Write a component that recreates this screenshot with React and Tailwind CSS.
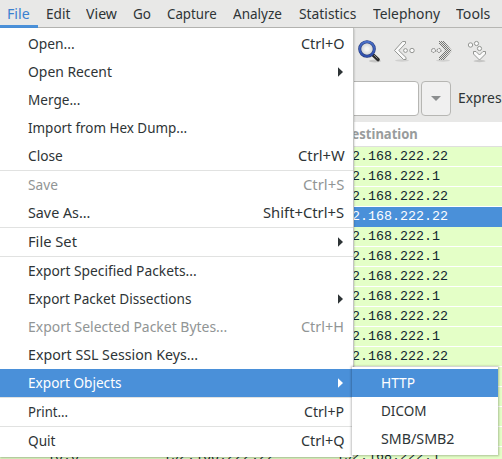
import { useLayoutEffect, useRef, useState } from "react";

// Text run scaled horizontally so that it fills a given width.
function Label({ children, w, className = "" }) {
  const ref = useRef(null);
  const [scale, setScale] = useState(1);
  useLayoutEffect(() => {
    setScale((w - 0.7) / ref.current.offsetWidth);
  }, [w]);
  return (
    <span className={"inline-block shrink-0 whitespace-pre " + className} style={{ width: w }}>
      <span ref={ref} className="inline-block origin-left" style={{ transform: `scaleX(${scale})` }}>
        {children}
      </span>
    </span>
  );
}

const menus = [
  ["Edit", 25, "ml-[7px]"],
  ["View", 32, "ml-[15px]"],
  ["Go", 19, "ml-[15px]"],
  ["Capture", 50, "ml-[15px]"],
  ["Analyze", 50, "ml-[16px]"],
  ["Statistics", 58, "ml-[16px]"],
  ["Telephony", 68, "ml-[16px]"],
  ["Tools", 35, "ml-[15px]"],
];

const items = [
  { t: "Open...", w: 47, k: "Ctrl+O", kw: 44 },
  { t: "Open Recent", w: 85, sub: true },
  { t: "Merge...", w: 53 },
  { t: "Import from Hex Dump...", w: 160 },
  { t: "Close", w: 36, k: "Ctrl+W", kw: 47 },
  null,
  { t: "Save", w: 31, k: "Ctrl+S", kw: 42, off: true },
  { t: "Save As...", w: 63, k: "Shift+Ctrl+S", kw: 82 },
  null,
  { t: "File Set", w: 50, sub: true },
  null,
  { t: "Export Specified Packets...", w: 169 },
  { t: "Export Packet Dissections", w: 164, sub: true },
  { t: "Export Selected Packet Bytes...", w: 200, k: "Ctrl+H", kw: 44, off: true },
  { t: "Export SSL Session Keys...", w: 171 },
  { t: "Export Objects", w: 94, sub: true, on: true },
  null,
  { t: "Print...", w: 41, k: "Ctrl+P", kw: 41 },
  null,
  { t: "Quit", w: 28, k: "Ctrl+Q", kw: 44 },
];

const rows = ["22", "1", "22", "22", "1", "1", "22", "1", "22", "1", "22", null, null, null, null, "1"];

function MenuItem({ item }) {
  if (!item) return <div className="h-px bg-[#e1e2e1]" />;
  const tone = item.on ? "bg-[#4a90d9] text-white" : item.off ? "text-[#919595]" : "text-[#2e3436]";
  return (
    <div className={"flex h-7 items-center justify-between pr-2 pl-7 " + tone}>
      <Label w={item.w}>{item.t}</Label>
      {item.k && <Label w={item.kw}>{item.k}</Label>}
      {item.sub && (
        <svg width="5" height="10" viewBox="0 0 5 10" className="mr-[2px]">
          <path d="M0 0.3L5 5L0 9.7Z" fill="currentColor" />
        </svg>
      )}
    </div>
  );
}

function Toolbar() {
  return (
    <div className="flex h-[46px] items-center pl-[357px]">
      <svg width="145" height="34" viewBox="357 34 145 34">
        <defs>
          <linearGradient id="blue" x1="0" y1="0" x2="0" y2="1">
            <stop offset="0" stopColor="#4a70c8" />
            <stop offset="1" stopColor="#2f4fae" />
          </linearGradient>
          <radialGradient id="lens">
            <stop offset="0.2" stopColor="#f4f4f2" />
            <stop offset="1" stopColor="#c6cace" />
          </radialGradient>
          <pattern id="dither" width="2" height="2" patternUnits="userSpaceOnUse">
            <rect width="2" height="2" fill="#e4e4e2" />
            <rect width="1" height="1" fill="#757674" />
            <rect x="1" y="1" width="1" height="1" fill="#757674" />
          </pattern>
        </defs>
        <ellipse cx="375" cy="61" rx="6" ry="1.5" fill="#000" opacity="0.15" />
        <ellipse cx="402" cy="60.5" rx="7" ry="1.2" fill="#000" opacity="0.1" />
        <ellipse cx="443" cy="60.5" rx="7" ry="1.2" fill="#000" opacity="0.1" />
        <ellipse cx="479.5" cy="61" rx="6" ry="1.2" fill="#000" opacity="0.15" />
        <path d="M372.5 54.5L378 59.5" stroke="#2a2a2a" strokeWidth="3.6" strokeLinecap="round" />
        <path d="M374 55L377.5 58.5" stroke="#8a8a8a" strokeWidth="1" />
        <circle cx="367" cy="49" r="7.3" fill="url(#lens)" stroke="#24397c" strokeWidth="3" />
        <circle cx="367" cy="49" r="7.3" fill="none" stroke="url(#blue)" strokeWidth="1.9" />
        <g stroke="#8a8c89" fill="#fafafa" strokeWidth="0.9">
          <path d="M402.5 41.5H405.5V43.5L398.8 50.5L406 57.5V59.5H403.5L394.5 50.5Z" />
          <circle cx="405.5" cy="50.5" r="1.9" />
          <circle cx="412" cy="50.5" r="2.2" />
          <circle cx="470.5" cy="45" r="2.2" />
          <circle cx="476.5" cy="43.5" r="2.1" />
          <circle cx="479.5" cy="48.5" r="2.1" />
          <path d="M473.5 51.5H476L479.5 55L483 51.5H485.5V54L479.5 60L473.5 54Z" />
        </g>
        <path d="M439 41H444L452 50.5L444 60H439V57L445 50.5L439 44Z" fill="url(#dither)" />
        <g fill="#eee" stroke="#757674" strokeDasharray="1.5 .6">
          <circle cx="433.5" cy="50.5" r="2" />
          <circle cx="439" cy="50.5" r="2" />
        </g>
      </svg>
    </div>
  );
}

export default function App() {
  return (
    <div className="relative h-[459px] w-[502px] overflow-hidden bg-[#e8e8e7] font-['Noto_Sans',sans-serif] text-[14px] leading-5 text-[#2e3436]">
      <div className="flex h-7 items-center border-b border-[#b6b6b3] bg-[#e8e8e7]">
        <div className="flex h-7 w-[38px] shrink-0 items-center border-b-[3px] border-[#4a90d9] pt-[3px] pl-[7px] text-[#3a80d0]">
          <Label w={23}>File</Label>
        </div>
        {menus.map(([t, w, m]) => (
          <Label key={t} w={w} className={"pl-px " + m}>{t}</Label>
        ))}
      </div>
      <Toolbar />
      <div className="flex h-12 items-center">
        <div className="h-[35px] w-[419px] shrink-0 rounded-[4px] border border-[#b6b6b3] bg-white" />
        <div className="ml-[2px] flex h-[35px] w-[30px] shrink-0 items-center justify-center rounded-[4px] border border-[#b6b6b3] bg-[#f0f0f0]">
          <svg width="10" height="5" viewBox="0 0 10 5">
            <path d="M0 0H10L5 5Z" fill="#8b8e8f" />
          </svg>
        </div>
        <Label w={83} className="ml-[7px]">Expression...</Label>
      </div>
      <div className="flex h-[25px] items-center border-b border-[#dfdfdd] bg-white pl-[342px] font-bold text-[#999c9c]">
        <Label w={77}>Destination</Label>
      </div>
      <div className="bg-white font-['Liberation_Mono',monospace] text-[13.33px] text-[#12272e]">
        {rows.map((r, i) => (
          <div
            key={i}
            className={
              "flex h-5 items-center border-b whitespace-pre " +
              (i === 3 ? "border-[#4a90d9] bg-[#4a90d9] text-white" : "border-white bg-[#e4ffc7]")
            }
          >
            <span className="w-[163px] shrink-0 pl-[47px]">{i === 15 && "10.0"}</span>
            <span className="w-[173px] shrink-0">{i === 15 && "192.168.222.22"}</span>
            <span>{r && "192.168.222." + r}</span>
          </div>
        ))}
      </div>
      <div className="absolute top-7 left-0 w-[354px] border-r border-[#c4c5c3] bg-white py-[2px] shadow-[0_1px_2px_rgba(0,0,0,0.3)]">
        {items.map((item, i) => (
          <MenuItem key={i} item={item} />
        ))}
      </div>
      <div className="absolute top-[367px] left-[352px] w-[146px] bg-white py-[2px] shadow-[0_0_2px_1px_rgba(0,0,0,0.25)]">
        <div className="flex h-7 items-center bg-[#4a90d9] pl-[29px] text-white"><Label w={35}>HTTP</Label></div>
        <div className="flex h-7 items-center pl-[29px]"><Label w={46}>DICOM</Label></div>
        <div className="flex h-7 items-center pl-[29px]"><Label w={74}>SMB/SMB2</Label></div>
      </div>
    </div>
  );
}
